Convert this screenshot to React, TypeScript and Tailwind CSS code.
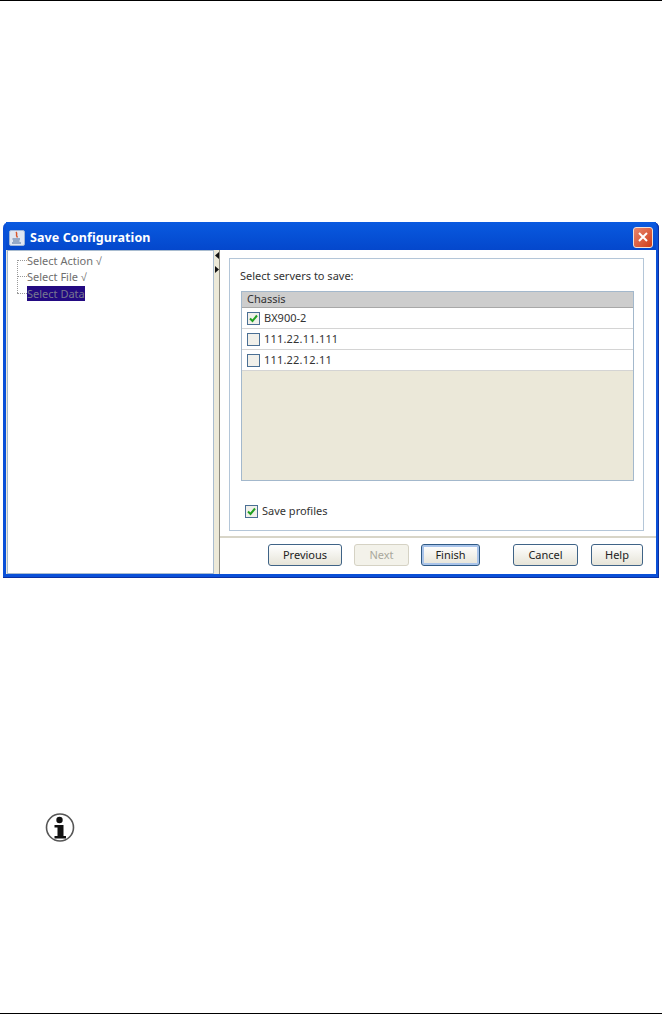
import type { ReactNode } from "react";

const font = { fontFamily: '"Noto Sans", "Liberation Sans", Arial, sans-serif' };

function CheckBox({ checked }: { checked?: boolean }) {
  return (
    <span className="flex h-[13px] w-[13px] shrink-0 items-center justify-center border border-[#4a6f94] bg-[#f1f0ea]">
      {checked && (
        <svg width="11" height="11" viewBox="0 0 11 11">
          <path d="M2 5.5 L4.5 8 L9 2.5" fill="none" stroke="#21a121" strokeWidth="2" />
        </svg>
      )}
    </span>
  );
}

function XpButton({
  children,
  width,
  disabled,
  focused,
}: {
  children: ReactNode;
  width: string;
  disabled?: boolean;
  focused?: boolean;
}) {
  const tone = disabled
    ? "border-[#d5d2c4] bg-[#f3f2ea] text-[#a9a89c]"
    : focused
      ? "border-[#2f5a85] bg-gradient-to-b from-white to-[#e6e4d8] text-[#222] shadow-[inset_0_0_0_2px_#a9c4ea]"
      : "border-[#3f6386] bg-gradient-to-b from-white to-[#e6e4d8] text-[#222]";
  return (
    <div className={`flex h-[22px] items-center justify-center rounded-[3px] border text-[11px] ${width} ${tone}`}>
      {children}
    </div>
  );
}

function TreeItem({ label, selected }: { label: string; selected?: boolean }) {
  return (
    <div className="flex h-[16.5px] items-center">
      <span className="w-[10px] border-t border-dotted border-[#999]" />
      <span className={`text-[11px] leading-[15px] ${selected ? "bg-[#230a82] text-[#77778f]" : "text-[#6e6e6e]"}`}>
        {label}
      </span>
    </div>
  );
}

function ServerRow({ label, checked, spaced }: { label: string; checked?: boolean; spaced?: boolean }) {
  return (
    <div className="flex h-[21px] items-center gap-[4px] border-b border-[#d4d4d4] bg-white pl-[5px]">
      <CheckBox checked={checked} />
      <span className={`text-[11px] text-[#333] ${spaced ? "tracking-[0.2px]" : ""}`}>{label}</span>
    </div>
  );
}

function InfoIcon() {
  return (
    <svg width="30" height="30" viewBox="0 0 30 30">
      <circle cx="15" cy="15.5" r="13.5" fill="white" stroke="#555" strokeWidth="1.6" />
      <circle cx="14.5" cy="8" r="3.2" fill="#111" />
      <path d="M9.5 13 H18.5 V24 H21 V26.5 H9.5 V24 H12.5 V15.5 H9.5 Z" fill="#111" />
    </svg>
  );
}

export default function App() {
  return (
    <div className="flex h-[1014px] w-[662px] flex-col bg-white" style={font}>
      <div className="h-px w-full bg-black" />
      <div className="h-[221px]" />

      {/* dialog window */}
      <div className="mx-[3px] flex h-[356px] w-[656px] flex-col rounded-t-[6px] bg-[#0a50d8] px-[3px] pb-[4px] shadow-[inset_0_-1px_0_#0a2fa0,inset_-1px_0_0_#0a2fa0]">
        <div className="flex h-[28px] shrink-0 items-center bg-gradient-to-b from-[#0a5ae0] to-[#0447cc] pt-[4px]">
          <div className="ml-[3px] flex h-[16px] w-[16px] items-center justify-center rounded-[2px] border border-[#9db4d8] bg-[#dfe6f2]">
            <svg width="14" height="14" viewBox="0 0 14 14">
              <path d="M6 1 C8 3 5 4 7.5 6.5" fill="none" stroke="#d8552a" strokeWidth="1.5" />
              <path d="M2.5 8 H10 M3 10 H9.5 M2 12 H11" stroke="#4d6d9c" strokeWidth="1.2" />
            </svg>
          </div>
          <span className="ml-[5px] text-[12.5px] font-bold tracking-[0.1px] text-white">Save Configuration</span>
          <div className="mr-[3px] ml-auto flex h-[21px] w-[20px] -translate-y-[1px] items-center justify-center rounded-[3px] border border-[#f0e0d8] bg-gradient-to-br from-[#e8846a] to-[#cf3a12]">
            <svg width="12" height="12" viewBox="0 0 12 12">
              <path d="M2 2 L10 10 M10 2 L2 10" stroke="white" strokeWidth="2" />
            </svg>
          </div>
        </div>

        <div className="flex min-h-0 flex-1 bg-[#ece9d8]">
          {/* wizard steps */}
          <div className="ml-px flex w-[207px] shrink-0 flex-col border border-[#a9bccf] bg-white pt-[1px] pl-[9px]">
            <div className="relative">
              <span className="absolute top-[8px] left-0 h-[33px] border-l border-dotted border-[#999]" />
              <TreeItem label="Select Action √" />
              <TreeItem label="Select File √" />
              <TreeItem label="Select Data" selected />
            </div>
          </div>

          {/* split handle */}
          <div className="flex w-[5px] shrink-0 flex-col items-center gap-[7px] pt-[2px]">
            <svg width="4" height="7" viewBox="0 0 4 7"><path d="M4 0 V7 L0 3.5 Z" fill="#111" /></svg>
            <svg width="4" height="7" viewBox="0 0 4 7"><path d="M0 0 V7 L4 3.5 Z" fill="#111" /></svg>
          </div>

          <div className="flex min-w-0 flex-1 flex-col border-l border-[#8d8b80] bg-white">
            <div className="mt-[8px] ml-[9px] flex h-[273px] w-[415px] flex-col border border-[#b4c6d8] px-[11px]">
              <div className="-ml-px flex h-[32px] shrink-0 items-center pt-[2px] text-[11px] text-[#333]">Select servers to save:</div>
              <div className="flex h-[190px] w-[393px] flex-col border border-[#a3b8cc] bg-[#ebe8d9]">
                <div className="flex h-[16px] shrink-0 items-center border-b border-[#a8a8a8] bg-[#cdcdcd] pl-[5px] text-[11px] text-[#333]">
                  Chassis
                </div>
                <ServerRow label="BX900-2" checked />
                <ServerRow label="111.22.11.111" spaced />
                <ServerRow label="111.22.12.11" spaced />
              </div>
              <div className="mt-[22px] flex items-center gap-[4px] pl-[4px]">
                <CheckBox checked />
                <span className="text-[11px] text-[#333]">Save profiles</span>
              </div>
            </div>

            <div className="mt-[5px] h-[2px] bg-[#d8d5c8]" />

            <div className="flex h-[36px] items-start pt-[6px] pl-[48px]">
              <XpButton width="w-[74px]">Previous</XpButton>
              <div className="w-[12px]" />
              <XpButton width="w-[55px]" disabled>Next</XpButton>
              <div className="w-[12px]" />
              <XpButton width="w-[59px]" focused>Finish</XpButton>
              <div className="w-[33px]" />
              <XpButton width="w-[65px]">Cancel</XpButton>
              <div className="w-[13px]" />
              <XpButton width="w-[52px]">Help</XpButton>
            </div>
          </div>
        </div>
      </div>

      <div className="flex flex-1 flex-col pt-[234px] pl-[45px]">
        <InfoIcon />
      </div>
      <div className="h-px w-full bg-black" />
    </div>
  );
}
